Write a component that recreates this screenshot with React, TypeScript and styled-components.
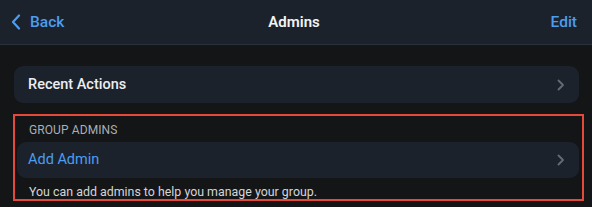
import styled, { createGlobalStyle } from "styled-components";

const GlobalStyle = createGlobalStyle`
  html, body {
    margin: 0;
    padding: 0;
    background: #141517;
  }
  body {
    font-family: Roboto, "Noto Sans", sans-serif;
    -webkit-font-smoothing: antialiased;
  }
`;

const Page = styled.div`
  width: 592px;
  height: 207px;
  background: #141517;
  overflow: hidden;
`;

const Header = styled.header`
  height: 45px;
  background: #1c222b;
  border-bottom: 1px solid #2a313b;
  box-sizing: border-box;
  display: grid;
  grid-template-columns: 1fr auto 1fr;
  align-items: center;
  padding: 0 15px 0 11px;
`;

const NavButton = styled.button<{ $align?: "start" | "end" }>`
  justify-self: ${(p) => (p.$align === "end" ? "end" : "start")};
  display: flex;
  align-items: center;
  gap: 9px;
  background: none;
  border: 0;
  padding: 0;
  color: #4c9df0;
  font-family: inherit;
  font-size: 15.5px;
  font-weight: 500;
  cursor: pointer;
`;

const Title = styled.h1`
  margin: 0;
  color: #f2f3f5;
  font-size: 15px;
  font-weight: 600;
`;

const Body = styled.main`
  padding: 21px 0 0;
  display: flex;
  flex-direction: column;
  gap: 11px;
`;

const Card = styled.div<{ $inset?: number }>`
  height: 37px;
  border-radius: 9px;
  background: #1c222b;
  display: flex;
  align-items: center;
  justify-content: space-between;
  padding: 0 14px 0 ${(p) => p.$inset ?? 14}px;
  box-sizing: border-box;
`;

const RecentCard = styled(Card)`
  margin: 0 13px 0 14px;
`;

const RowLabel = styled.span<{ $accent?: boolean }>`
  color: ${(p) => (p.$accent ? "#4c9df0" : "#eceef1")};
  font-size: 14.5px;
  font-weight: ${(p) => (p.$accent ? 400 : 500)};
`;

const Highlight = styled.section`
  margin-left: 13px;
  width: 571px;
  height: 87px;
  box-sizing: border-box;
  border: 2px solid #e34a3a;
  padding: 0 3px 0 2px;
  display: flex;
  flex-direction: column;
`;

const SectionTitle = styled.div`
  color: #a9aeb5;
  font-size: 12px;
  letter-spacing: 0.1px;
  padding: 7px 0 0 12px;
  height: 26px;
  box-sizing: border-box;
`;

const Footnote = styled.p`
  margin: 0;
  padding: 6px 0 0 12px;
  color: #d3d6da;
  font-size: 12.4px;
`;

const Chevron = ({ color = "#646b75" }: { color?: string }) => (
  <svg width="8" height="12" viewBox="0 0 8 12" fill="none">
    <path d="M1.5 1.5L6 6L1.5 10.5" stroke={color} strokeWidth="1.8" strokeLinecap="round" strokeLinejoin="round" />
  </svg>
);

const BackArrow = () => (
  <svg width="10" height="16" viewBox="0 0 10 16" fill="none">
    <path d="M8 1.5L2 8L8 14.5" stroke="#4c9df0" strokeWidth="2.2" strokeLinecap="round" strokeLinejoin="round" />
  </svg>
);

export default function App() {
  return (
    <Page>
      <GlobalStyle />
      <Header>
        <NavButton>
          <BackArrow />
          Back
        </NavButton>
        <Title>Admins</Title>
        <NavButton $align="end">Edit</NavButton>
      </Header>
      <Body>
        <RecentCard>
          <RowLabel>Recent Actions</RowLabel>
          <Chevron />
        </RecentCard>
        <Highlight>
          <SectionTitle>GROUP ADMINS</SectionTitle>
          <Card $inset={11}>
            <RowLabel $accent>Add Admin</RowLabel>
            <Chevron />
          </Card>
          <Footnote>You can add admins to help you manage your group.</Footnote>
        </Highlight>
      </Body>
    </Page>
  );
}
